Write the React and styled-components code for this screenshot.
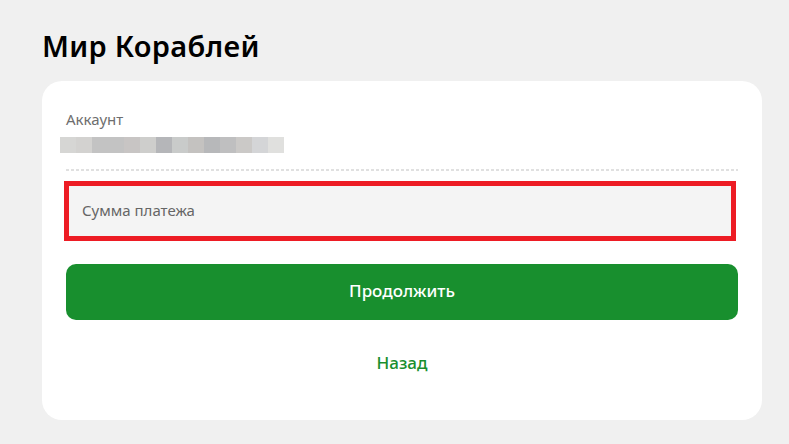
import React from "react";
import styled, { createGlobalStyle } from "styled-components";

const GlobalStyle = createGlobalStyle`
  html, body {
    margin: 0;
    padding: 0;
    background: #f0f0f0;
  }
  body {
    font-family: "Noto Sans", "Open Sans", Arial, sans-serif;
  }
`;

const blurColors = [
  "#d6d6d4",
  "#d3d2d0",
  "#c3c3c3",
  "#c3c3c3",
  "#c8c5c4",
  "#cececc",
  "#b5b6b9",
  "#c9cbca",
  "#c4c2c0",
  "#b7b8ba",
  "#bfbfc0",
  "#cbc9c7",
  "#d4d5d7",
  "#e0e0de",
];

const App = () => {
  return (
    <Page>
      <GlobalStyle />
      <Title>Мир Кораблей</Title>
      <Card>
        <Label>Аккаунт</Label>
        <Masked>
          {blurColors.map((c, i) => (
            <Pixel key={i} $color={c} />
          ))}
        </Masked>
        <Divider />
        <AmountField>
          <Placeholder>Сумма платежа</Placeholder>
        </AmountField>
        <PrimaryButton>Продолжить</PrimaryButton>
        <BackLink>Назад</BackLink>
      </Card>
    </Page>
  );
};

export default App;

const Page = styled.div`
  padding: 25px 27px 24px 42px;
  display: flex;
  flex-direction: column;
`;

const Title = styled.h1`
  margin: 0 0 15px;
  font-size: 29px;
  line-height: 41px;
  font-weight: 600;
  color: #000;
  letter-spacing: 0.3px;
`;

const Card = styled.div`
  background: #fff;
  border-radius: 20px;
  padding: 28px 24px 46px;
  display: flex;
  flex-direction: column;
`;

const Label = styled.div`
  font-size: 15px;
  line-height: 20px;
  color: #6e6e6e;
`;

const Masked = styled.div`
  display: flex;
  margin: 8px 0 0 -6px;
  height: 16px;
`;

const Pixel = styled.span`
  width: 16px;
  height: 16px;
  background: ${(p) => p.$color};
`;

const Divider = styled.div`
  margin-top: 16px;
  height: 2px;
  background: repeating-linear-gradient(
    to right,
    #e0e0e0 0 3px,
    transparent 3px 5px
  );
`;

const AmountField = styled.div`
  margin: 10px 2px 0 -2px;
  height: 60px;
  box-sizing: border-box;
  border: 5px solid #ed1c24;
  background: #f4f4f4;
  display: flex;
  align-items: center;
  padding: 0 13px 3px;
`;

const Placeholder = styled.span`
  font-size: 15px;
  color: #666;
`;

const PrimaryButton = styled.button`
  margin-top: 23px;
  height: 56px;
  padding: 0 0 3px;
  border: none;
  border-radius: 10px;
  background: #188f2e;
  color: #fff;
  font-family: inherit;
  font-size: 17px;
  font-weight: 500;
  cursor: pointer;
`;

const BackLink = styled.a`
  margin-top: 32px;
  text-align: center;
  font-size: 17px;
  line-height: 22px;
  font-weight: 500;
  color: #188f2e;
  cursor: pointer;
`;
